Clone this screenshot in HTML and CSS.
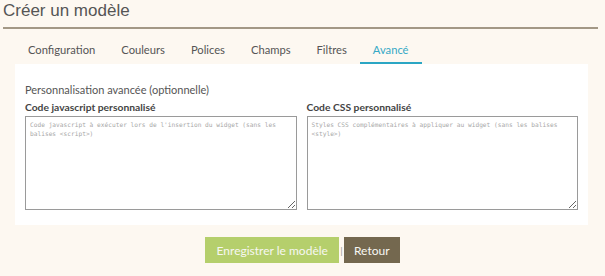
FILE: index.html
```html
<!DOCTYPE html>
<html lang="fr">
<head>
<meta charset="utf-8">
<title>Créer un modèle</title>
<link rel="stylesheet" href="styles.css">
</head>
<body>
<div class="page">
  <h1 class="title">Créer un modèle</h1>
  <nav class="tabs">
    <a class="tab">Configuration</a>
    <a class="tab">Couleurs</a>
    <a class="tab">Polices</a>
    <a class="tab">Champs</a>
    <a class="tab">Filtres</a>
    <a class="tab active">Avancé</a>
  </nav>
  <section class="panel">
    <h2 class="panel-title">Personnalisation avancée (optionnelle)</h2>
    <div class="cols">
      <div class="field">
        <label class="label">Code javascript personnalisé</label>
        <textarea class="code" placeholder="Code javascript à exécuter lors de l'insertion du widget (sans les balises <script>)"></textarea>
      </div>
      <div class="field">
        <label class="label">Code CSS personnalisé</label>
        <textarea class="code" placeholder="Styles CSS complémentaires à appliquer au widget (sans les balises <style>)"></textarea>
      </div>
    </div>
  </section>
  <div class="actions">
    <button class="btn btn-save">Enregistrer le modèle</button>
    <span class="sep">|</span>
    <button class="btn btn-back">Retour</button>
  </div>
</div>
</body>
</html>
```
FILE: styles.css
```css
html, body {
  margin: 0;
  padding: 0;
  background: #fdf8f1;
}
.page {
  width: 605px;
  height: 276px;
  font-family: Lato, "Open Sans", sans-serif;
}
.title {
  margin: 0 7px 0 3px;
  height: 27px;
  font-family: "Liberation Sans", Arial, sans-serif;
  font-weight: normal;
  font-size: 17px;
  line-height: 21px;
  color: #555;
  border-bottom: 2px solid #a39886;
}
.tabs {
  display: flex;
  padding-left: 15px;
  height: 35px;
  align-items: flex-end;
}
.tab {
  display: block;
  padding: 0 13px;
  font-size: 11.2px;
  line-height: 16px;
  height: 22px;
  color: #555;
  box-sizing: border-box;
  border-bottom: 2px solid transparent;
  white-space: nowrap;
}
.tab.active {
  color: #36a9c6;
  border-bottom-color: #2ba6c4;
}
.panel {
  margin-left: 15px;
  width: 573px;
  height: 161px;
  background: #fff;
  box-sizing: border-box;
  padding: 18px 10px 0 10px;
}
.panel-title {
  margin: 0;
  font-weight: normal;
  font-size: 11px;
  line-height: 16px;
  color: #555;
}
.cols {
  display: flex;
  gap: 10px;
  margin-top: 3px;
}
.field {
  flex: 1;
  display: flex;
  flex-direction: column;
}
.label {
  font-weight: bold;
  font-size: 10.3px;
  line-height: 13px;
  color: #444;
  margin-bottom: 2px;
}
.code {
  display: block;
  box-sizing: border-box;
  width: 100%;
  height: 94px;
  margin: 0;
  border: 1px solid #9a9a9a;
  padding: 3px 4px;
  font-family: "DejaVu Sans Mono", "Liberation Mono", monospace;
  font-size: 6.2px;
  line-height: 9px;
  color: #333;
  background: #fff;
}
.code::placeholder {
  color: #a8a8a8;
}
.actions {
  display: flex;
  justify-content: center;
  align-items: center;
  gap: 1px;
  margin-top: 12px;
}
.btn {
  height: 26px;
  border: 0;
  font-family: Lato, "Open Sans", sans-serif;
  font-size: 12px;
  color: #f7f7f2;
  padding: 0;
  white-space: nowrap;
}
.btn-save {
  background: #b5cf6c;
  width: 134px;
}
.btn-back {
  background: #74684f;
  width: 56px;
}
.sep {
  color: #999;
  font-size: 10px;
}
```
